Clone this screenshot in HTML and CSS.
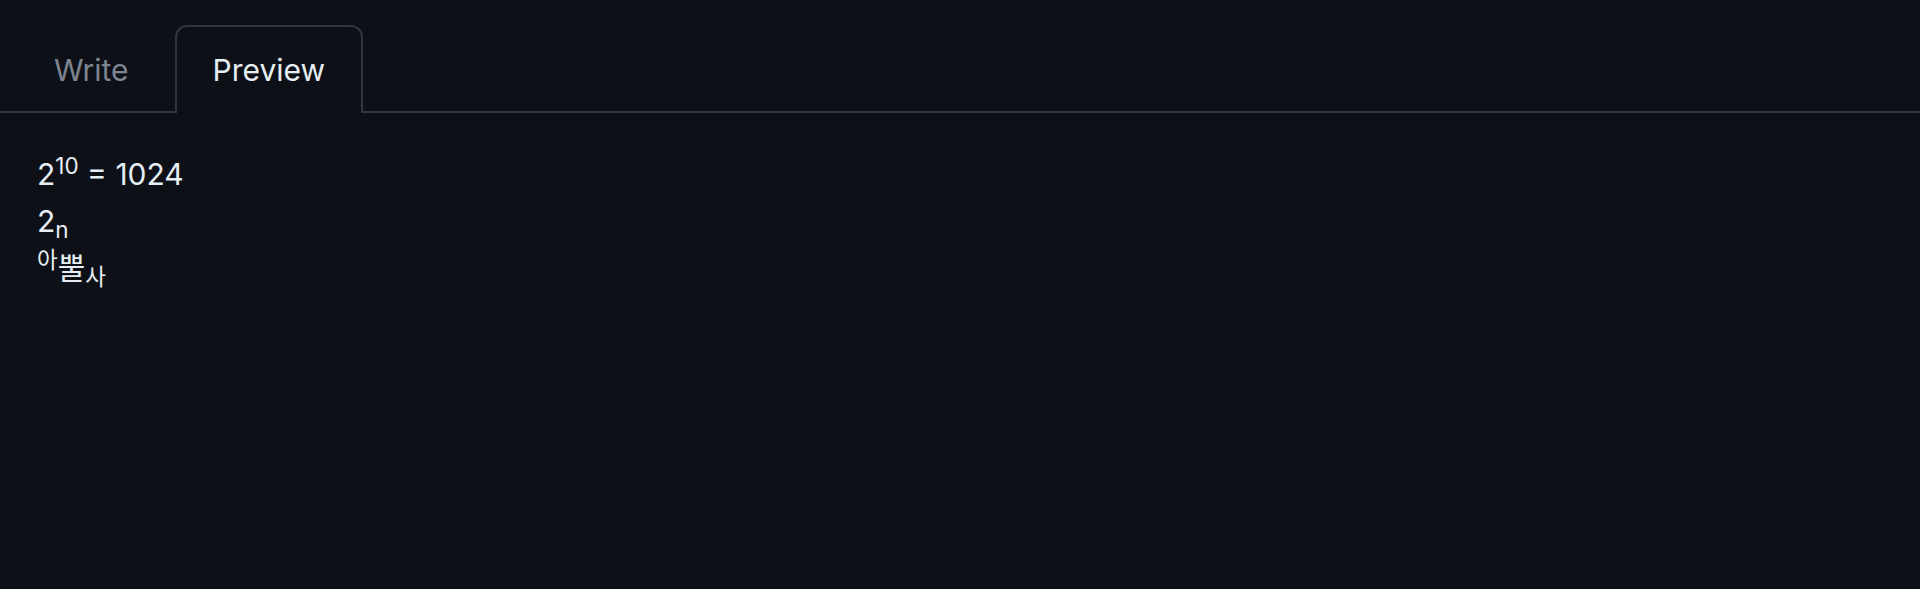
FILE: index.html
```html
<!DOCTYPE html>
<html lang="ko">
<head>
<meta charset="utf-8">
<title>Preview</title>
<link rel="stylesheet" href="styles.css">
</head>
<body>
<div class="editor">
  <div class="tabs">
    <div class="tab">Write</div>
    <div class="tab tab-active">Preview</div>
  </div>
  <div class="preview">
    <p class="line">2<sup>10</sup> = 1024</p>
    <p class="line">2<sub>n</sub></p>
    <p class="line"><sup>아</sup>뿔<sub>사</sub></p>
  </div>
</div>
</body>
</html>
```
FILE: styles.css
```css
html, body {
  margin: 0;
  padding: 0;
  background: #0d1117;
  height: 100%;
}
body {
  font-family: Inter, "Noto Sans CJK KR", sans-serif;
  color: #e6edf3;
}
.tabs {
  display: flex;
  padding: 25px 0 0 16px;
  gap: 8px;
  border-bottom: 2px solid #30363d;
}
.tab {
  height: 86px;
  margin-bottom: -2px;
  padding: 0 36px;
  display: flex;
  align-items: center;
  font-size: 30px;
  color: #7d8590;
  border: 2px solid transparent;
  border-bottom: 0;
  border-radius: 12px 12px 0 0;
}
.tab-active {
  color: #e6edf3;
  border-color: #30363d;
  background: #0d1117;
}
.preview {
  padding: 38px 37px;
}
.line {
  margin: 0;
  font-size: 30px;
  line-height: 47px;
}
sup, sub {
  font-size: 75%;
  line-height: 0;
  position: relative;
  vertical-align: baseline;
}
sup { top: -0.5em; }
sub { bottom: -0.25em; }
```
